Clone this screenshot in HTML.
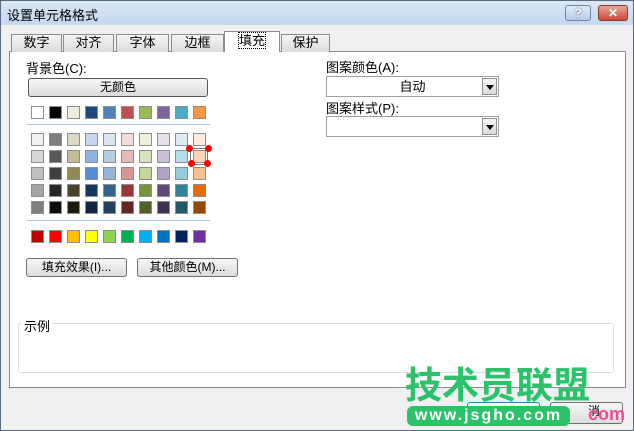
<html><head><style>
*{margin:0;padding:0;box-sizing:border-box}
body{width:634px;height:431px;overflow:hidden;background:#f0f0f0;font-family:"Liberation Sans","Noto Sans CJK SC",sans-serif;font-size:12px;position:relative;color:#000}
.a{position:absolute}
.sw{position:absolute;width:13px;height:13px;border:1px solid #8e8e8e}
.btn{position:absolute;border:1px solid #707070;border-radius:3px;background:linear-gradient(#f6f6f6,#dcdcdc);text-align:center;line-height:17px}
.tab{position:absolute;top:34px;height:18px;border:1px solid #898c95;border-bottom:none;background:linear-gradient(#f4f4f4,#dcdcdc);text-align:center;line-height:16px;font-size:13px}
.cb{position:absolute;background:#fff;border:1px solid #a0a0a0}
.dd{position:absolute;right:1px;top:1px;width:15px;height:17px;background:linear-gradient(#f6f6f6,#d8d8d8);border:1px solid #8e8e8e}
.dd:after{content:"";position:absolute;left:3px;top:6px;border:4px solid transparent;border-top:5px solid #000}
</style></head><body>
<div class="a" style="left:0;top:0;width:634px;height:431px;border:1px solid #5a6b80;background:#f0f0f0"></div>
<div class="a" style="left:1px;top:1px;width:632px;height:24px;background:linear-gradient(#dbe8f6,#c3d7ee)"></div>
<div class="a" style="left:7px;top:5px;font-size:13px">设置单元格格式</div>
<div class="a" style="left:565px;top:5px;width:26px;height:16px;border:1px solid #6d86a6;border-radius:3px;background:linear-gradient(#dfeaf7,#b9cde6);text-align:center;font-weight:bold;color:#fff;line-height:14px;text-shadow:0 0 2px #445">?</div>
<div class="a" style="left:598px;top:5px;width:30px;height:16px;border:1px solid #8a3a30;border-radius:3px;background:linear-gradient(#e9a596,#c8493a);text-align:center;font-weight:bold;color:#fff;line-height:14px">✕</div>
<div class="a" style="left:9px;top:51px;width:617px;height:337px;background:#fff;border:1px solid #898c95"></div>
<div class="tab" style="left:11px;width:51px">数字</div>
<div class="tab" style="left:63px;width:51px">对齐</div>
<div class="tab" style="left:116px;width:53px">字体</div>
<div class="tab" style="left:171px;width:53px">边框</div>
<div class="tab" style="left:224px;top:31px;height:21px;width:56px;background:#fff;border-color:#898c95;line-height:18px"><span style="outline:1px dotted #000">填充</span></div>
<div class="tab" style="left:281px;width:49px">保护</div>
<div class="a" style="left:26px;top:58px;font-size:13px">背景色(C):</div>
<div class="btn" style="left:28px;top:78px;width:180px;height:19px;border-color:#555">无颜色</div>
<div class="a" style="left:27px;top:124px;width:183px;height:1px;background:#a6c4e6"></div>
<div class="a" style="left:27px;top:220px;width:183px;height:1px;background:#a6c4e6"></div>
<div id="g"></div>
<div class="btn" style="left:26px;top:258px;width:101px;height:19px">填充效果(I)...</div>
<div class="btn" style="left:137px;top:258px;width:101px;height:19px">其他颜色(M)...</div>
<div class="a" style="left:326px;top:57px;font-size:13px">图案颜色(A):</div>
<div class="cb" style="left:326px;top:76px;width:173px;height:21px;text-align:center;line-height:19px;font-size:13px">自动<div class="dd"></div></div>
<div class="a" style="left:326px;top:98px;font-size:13px">图案样式(P):</div>
<div class="cb" style="left:326px;top:116px;width:173px;height:21px"><div class="dd"></div></div>
<div class="a" style="left:18px;top:323px;width:596px;height:50px;border:1px solid #d5dfe5;border-radius:3px"></div>
<div class="a" style="left:22px;top:316px;background:#fff;padding:0 2px;font-size:13px">示例</div>
<div class="btn" style="left:467px;top:402px;width:73px;height:22px;border-color:#3c7fb1"></div>
<div class="btn" style="left:550px;top:402px;width:73px;height:22px;text-align:right;padding-right:22px">消</div>
<div class="a" style="left:405px;top:362px;font-size:37px;font-weight:bold;color:#2cc26a;letter-spacing:0px;line-height:40px;font-family:'Noto Sans CJK SC',sans-serif">技术员联盟</div>
<div class="a" style="left:407px;top:406px;width:163px;height:20px;border-radius:6px;background:#2cc26a;color:#fff;font-weight:bold;font-size:16px;text-align:center;line-height:20px;letter-spacing:2px">www.jsgho.com</div>
<div class="a" style="left:588px;top:404px;color:#ee4b9a;font-size:18px;font-weight:bold">com</div>
<script>
var rows=[
[106,["#fff","#000","#eeece1","#1f497d","#4f81bd","#c0504d","#9bbb59","#8064a2","#4bacc6","#f79646"]],
[133,["#f2f2f2","#7f7f7f","#ddd9c3","#c6d9f0","#dbe5f1","#f2dcdb","#ebf1dd","#e5e0ec","#dbeef3","#fdeada"]],
[150,["#d8d8d8","#595959","#c4bd97","#8db3e2","#b8cce4","#e5b9b7","#d7e3bc","#ccc1d9","#b7dde8","#fbd5b5"]],
[167,["#bfbfbf","#3f3f3f","#938953","#548dd4","#95b3d7","#d99694","#c3d69b","#b2a2c7","#92cddc","#fac08f"]],
[184,["#a5a5a5","#262626","#494429","#17365d","#366092","#953734","#76923c","#5f497a","#31859b","#e36c09"]],
[201,["#7f7f7f","#0c0c0c","#1d1b10","#0f243e","#244061","#632423","#4f6128","#3f3151","#205867","#974806"]],
[230,["#c00000","#ff0000","#ffc000","#ffff00","#92d050","#00b050","#00b0f0","#0070c0","#002060","#7030a0"]]];
var h="";rows.forEach(function(r){r[1].forEach(function(c,i){h+='<div class="sw" style="left:'+(31+i*18)+'px;top:'+r[0]+'px;background:'+c+'"></div>'})});
h+='<div class="a" style="left:190px;top:148px;width:18px;height:17px;border:1px solid #777"></div>';
[[189,148],[208,148],[191,163],[207,163]].forEach(function(p){h+='<div class="a" style="left:'+(p[0]-3)+'px;top:'+(p[1]-3)+'px;width:7px;height:7px;border-radius:50%;background:#f00"></div>'});
document.getElementById("g").innerHTML=h;
</script>
</body></html>
